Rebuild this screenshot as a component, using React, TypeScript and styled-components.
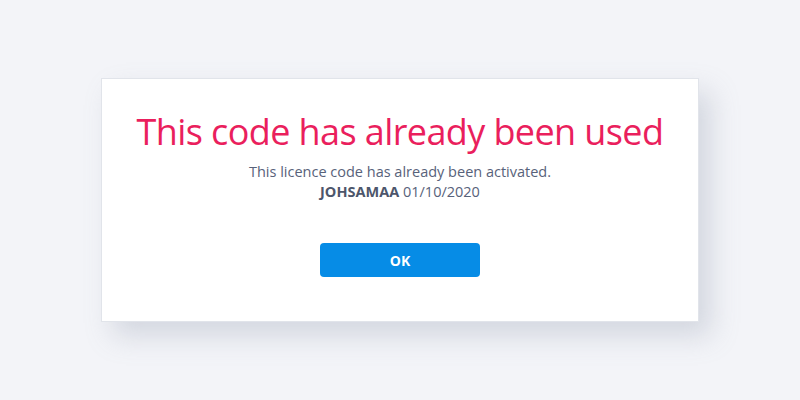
import React from "react";
import styled, { createGlobalStyle } from "styled-components";

const Global = createGlobalStyle`
  html, body { margin: 0; padding: 0; background: #f3f4f8; }
  body { font-family: "Open Sans", "Liberation Sans", sans-serif; }
`;

const Page = styled.div`
  width: 800px;
  height: 400px;
  display: flex;
  align-items: flex-start;
  justify-content: center;
  padding-top: 78px;
  box-sizing: border-box;
`;

const Card = styled.div`
  width: 598px;
  height: 244px;
  box-sizing: border-box;
  background: #ffffff;
  border: 1px solid #e1e4ea;
  box-shadow: 12px 14px 26px rgba(140, 148, 170, 0.3);
  display: flex;
  flex-direction: column;
  align-items: center;
  padding-top: 28px;
`;

const Title = styled.h1`
  margin: 0;
  font-size: 36px;
  font-weight: 400;
  line-height: 50px;
  letter-spacing: -0.6px;
  color: #ea1f5d;
`;

const Message = styled.p`
  margin: 5px 0 0;
  font-size: 14.5px;
  line-height: 20px;
  color: #58627a;
  text-align: center;
`;

const User = styled.strong`
  font-weight: 700;
  color: #4d566b;
`;

const Button = styled.button`
  margin-top: 41px;
  width: 160px;
  height: 34px;
  padding: 0;
  border: none;
  border-radius: 4px;
  background: #068ce6;
  color: #ffffff;
  font-family: "Open Sans", "Liberation Sans", sans-serif;
  font-size: 14px;
  font-weight: 700;
  cursor: pointer;
`;

export default function App() {
  return (
    <>
      <Global />
      <Page>
        <Card>
          <Title>This code has already been used</Title>
          <Message>
            This licence code has already been activated.
            <br />
            <User>JOHSAMAA</User> 01/10/2020
          </Message>
          <Button>OK</Button>
        </Card>
      </Page>
    </>
  );
}
